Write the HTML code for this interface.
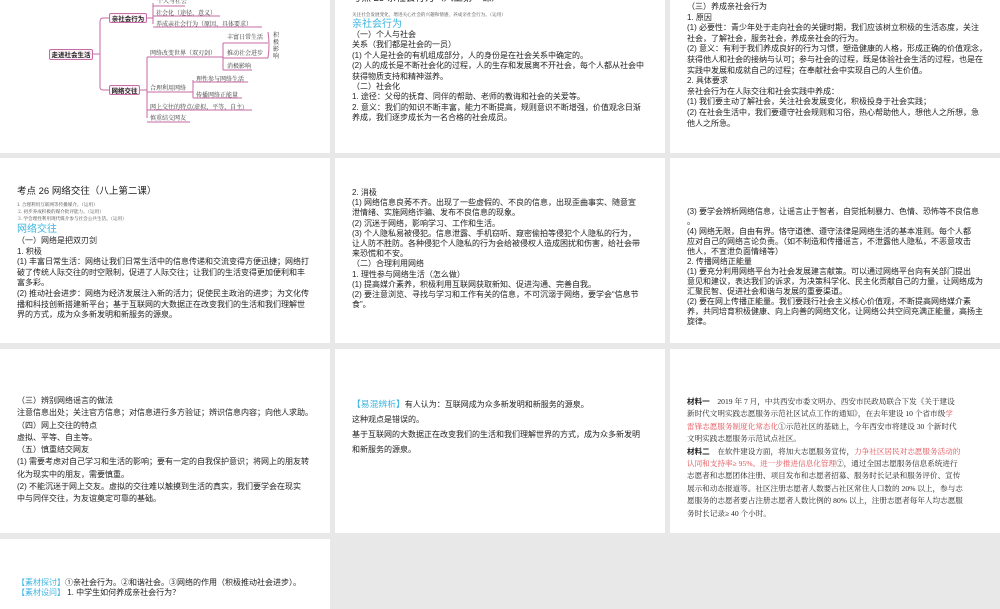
<!DOCTYPE html>
<html><head><meta charset="utf-8">
<style>
*{margin:0;padding:0;box-sizing:border-box}
body{width:1000px;height:600px;background:#e8e8e8;position:relative;overflow:hidden;font-family:"Liberation Sans","Noto Sans CJK SC",sans-serif;color:#222}
.s{position:absolute;background:#fff;overflow:hidden}
.t{position:absolute;white-space:nowrap;font-size:8px;line-height:10.4px}
.c{color:#3bb4e0}
.sm{font-size:4.6px;line-height:7px;color:#444;font-family:"Noto Serif CJK SC",serif}
.mm{position:absolute;font-size:6px;line-height:8px;white-space:nowrap;font-family:"Noto Serif CJK SC",serif;color:#333}
.bx{position:absolute;border:1px solid #c76aa5;border-radius:2px;font-size:6.5px;font-weight:bold;line-height:9px;text-align:center;background:#fdf2f8;font-family:"Noto Sans CJK SC",sans-serif}
.r{color:#e0484f}
.ser{font-family:"Liberation Serif","Noto Serif CJK SC",serif}
</style></head><body>

<div class="s" style="left:0;top:0;width:330px;height:153px">
<svg width="330" height="153" style="position:absolute;left:0;top:0" fill="none" stroke="#c76aa5" stroke-width="1">
<path d="M93 54 H100 M100 22 V87 Q100 90 103 90 H109 M100 22 Q100 18 103 18 H109"/>
<path d="M147 18 H153 M153 3 V24 M153 6 H185 M153 16 H220 M153 27 H262"/>
<path d="M140 90 H147 M147 57 V118 M147 57 H223 M147 92 H193 M147 110 H252 M147 122 H190"/>
<path d="M223 43 V70 M223 43 H268 M223 58 H268 M223 70 H252 M268 32 Q270 45 268 58"/>
<path d="M193 80 V98 M193 82 H248 M193 98 H242"/>
</svg>
<div class="bx" style="left:49px;top:49px;width:44px;height:11px">走进社会生活</div>
<div class="bx" style="left:109px;top:13px;width:38px;height:10px">亲社会行为</div>
<div class="bx" style="left:109px;top:85px;width:31px;height:10px">网络交往</div>
<div class="mm" style="left:157px;top:-3px">个人与社会</div>
<div class="mm" style="left:156px;top:9px">社会化（途径、意义）</div>
<div class="mm" style="left:156px;top:20px">养成亲社会行为（原因、具体要求）</div>
<div class="mm" style="left:150px;top:49px">网络改变世界（双刃剑）</div>
<div class="mm" style="left:227px;top:33px">丰富日常生活</div>
<div class="mm" style="left:227px;top:49px">推动社会进步</div>
<div class="mm" style="left:227px;top:62px">消极影响</div>
<div class="mm" style="left:273px;top:31px;width:6px;white-space:normal;line-height:7px">积极影响</div>
<div class="mm" style="left:150px;top:84px">合理利用网络</div>
<div class="mm" style="left:196px;top:75px">理性参与网络生活</div>
<div class="mm" style="left:196px;top:91px">传播网络正能量</div>
<div class="mm" style="left:150px;top:103px">网上交往的特点(虚拟、平等、自主)</div>
<div class="mm" style="left:150px;top:114px">慎重结交网友</div>
</div>

<div class="s" style="left:335px;top:0;width:330px;height:153px">
<div class="t" style="left:17px;top:-7px;font-size:9.5px;line-height:12px">考点 25 亲社会行为（八上第一课）</div>
<div class="t sm" style="left:17px;top:12px">关注社会发展变化，增进关心社会的兴趣和情感，养成亲社会行为。（运用）</div>
<div class="t c" style="left:17px;top:19px;font-size:10px;line-height:12px">亲社会行为</div>
<div class="t" style="left:17px;top:30px">（一）个人与社会<br>关系（我们都是社会的一员）<br>(1) 个人是社会的有机组成部分，人的身份是在社会关系中确定的。<br>(2) 人的成长是不断社会化的过程，人的生存和发展离不开社会，每个人都从社会中<br>获得物质支持和精神滋养。<br>（二）社会化<br>1. 途径：父母的抚育、同伴的帮助、老师的教诲和社会的关爱等。<br>2. 意义：我们的知识不断丰富，能力不断提高，规则意识不断增强，价值观念日渐<br>养成，我们逐步成长为一名合格的社会成员。</div>
</div>

<div class="s" style="left:670px;top:0;width:330px;height:153px">
<div class="t" style="left:17px;top:2px;line-height:10.6px">（三）养成亲社会行为<br>1. 原因<br>(1) 必要性：青少年处于走向社会的关键时期，我们应该树立积极的生活态度，关注<br>社会，了解社会，服务社会，养成亲社会的行为。<br>(2) 意义：有利于我们养成良好的行为习惯，塑造健康的人格，形成正确的价值观念，<br>获得他人和社会的接纳与认可；参与社会的过程，既是体验社会生活的过程，也是在<br>实践中发展和成就自己的过程；在奉献社会中实现自己的人生价值。<br>2. 具体要求<br>亲社会行为在人际交往和社会实践中养成：<br>(1) 我们要主动了解社会，关注社会发展变化，积极投身于社会实践；<br>(2) 在社会生活中，我们要遵守社会规则和习俗，热心帮助他人，想他人之所想，急<br>他人之所急。</div>
</div>

<div class="s" style="left:0;top:158px;width:330px;height:185px">
<div class="t" style="left:17px;top:28px;font-size:9.5px;line-height:12px">考点 26 网络交往（八上第二课）</div>
<div class="t sm" style="left:17px;top:44px">1. 合理利用互联网等传播媒介。（运用）<br>&nbsp;2. 初步养成积极的媒介批评能力。（运用）<br>&nbsp;3. 学会理性利用现代媒介参与社会公共生活。（运用）</div>
<div class="t c" style="left:17px;top:66px;font-size:10px;line-height:12px">网络交往</div>
<div class="t" style="left:17px;top:78px;line-height:10.6px">（一）网络是把双刃剑<br>1. 积极<br>(1) 丰富日常生活：网络让我们日常生活中的信息传递和交流变得方便迅捷；网络打<br>破了传统人际交往的时空限制，促进了人际交往；让我们的生活变得更加便利和丰<br>富多彩。<br>(2) 推动社会进步：网络为经济发展注入新的活力；促使民主政治的进步；为文化传<br>播和科技创新搭建新平台；基于互联网的大数据正在改变我们的生活和我们理解世<br>界的方式，成为众多新发明和新服务的源泉。</div>
</div>

<div class="s" style="left:335px;top:158px;width:330px;height:185px">
<div class="t" style="left:17px;top:30px;line-height:10.2px">2. 消极<br>(1) 网络信息良莠不齐。出现了一些虚假的、不良的信息，出现歪曲事实、随意宣<br>泄情绪、实施网络诈骗、发布不良信息的现象。<br>(2) 沉迷于网络，影响学习、工作和生活。<br>(3) 个人隐私易被侵犯。信息泄露、手机窃听、窥密偷拍等侵犯个人隐私的行为，<br>让人防不胜防。各种侵犯个人隐私的行为会给被侵权人造成困扰和伤害，给社会带<br>来恐慌和不安。<br>（二）合理利用网络<br>1. 理性参与网络生活（怎么做）<br>(1) 提高媒介素养，积极利用互联网获取新知、促进沟通、完善自我。<br>(2) 要注意浏览、寻找与学习和工作有关的信息，不可沉溺于网络，要学会“信息节<br>食”。</div>
</div>

<div class="s" style="left:670px;top:158px;width:330px;height:185px">
<div class="t" style="left:17px;top:49px;line-height:10px">(3) 要学会辨析网络信息，让谣言止于智者，自觉抵制暴力、色情、恐怖等不良信息<br>。<br>(4) 网络无限，自由有界。恪守道德、遵守法律是网络生活的基本准则。每个人都<br>应对自己的网络言论负责。（如不制造和传播谣言，不泄露他人隐私，不恶意攻击<br>他人，不宣泄负面情绪等）<br>2. 传播网络正能量<br>(1) 要充分利用网络平台为社会发展建言献策。可以通过网络平台向有关部门提出<br>意见和建议，表达我们的诉求，为决策科学化、民主化贡献自己的力量，让网络成为<br>汇聚民智、促进社会和谐与发展的重要渠道。<br>(2) 要在网上传播正能量。我们要践行社会主义核心价值观，不断提高网络媒介素<br>养，共同培育积极健康、向上向善的网络文化，让网络公共空间充满正能量，高扬主<br>旋律。</div>
</div>

<div class="s" style="left:0;top:349px;width:330px;height:184px">
<div class="t" style="left:17px;top:46px;line-height:12.3px">（三）辨别网络谣言的做法<br>注意信息出处；关注官方信息；对信息进行多方验证；辨识信息内容；向他人求助。<br>（四）网上交往的特点<br>虚拟、平等、自主等。<br>（五）慎重结交网友<br>(1) 需要考虑对自己学习和生活的影响；要有一定的自我保护意识；将网上的朋友转<br>化为现实中的朋友，需要慎重。<br>(2) 不能沉迷于网上交友。虚拟的交往难以触摸到生活的真实，我们要学会在现实<br>中与同伴交往，为友谊奠定可靠的基础。</div>
</div>

<div class="s" style="left:335px;top:349px;width:330px;height:184px">
<div class="t" style="left:17px;top:48px;line-height:15px"><span class="c" style="font-size:8.8px">【易混辨析】</span>有人认为：互联网成为众多新发明和新服务的源泉。<br>这种观点是错误的。<br>基于互联网的大数据正在改变我们的生活和我们理解世界的方式，成为众多新发明<br>和新服务的源泉。</div>
</div>

<div class="s" style="left:670px;top:349px;width:330px;height:184px">
<div class="t ser" style="left:17px;top:47px;line-height:12.4px;font-size:7.6px"><b style="font-family:'Noto Sans CJK SC',sans-serif">材料一</b>　2019 年 7 月，中共西安市委文明办、西安市民政局联合下发《关于建设<br>新时代文明实践志愿服务示范社区试点工作的通知》，在去年建设 10 个省市级<span class="r">学</span><br><span class="r">雷锋志愿服务制度化常态化</span>①示范社区的基础上，今年西安市将建设 30 个新时代<br>文明实践志愿服务示范试点社区。<br><b style="font-family:'Noto Sans CJK SC',sans-serif">材料二</b>　在软件建设方面，将加大志愿服务宣传，<span class="r">力争社区居民对志愿服务活动的</span><br><span class="r">认同和支持率≥ 95%。进一步推进信息化管理</span>②，通过全国志愿服务信息系统进行<br>志愿者和志愿团体注册、项目发布和志愿者招募、服务时长记录和服务评价、宣传<br>展示和动态报道等。社区注册志愿者人数要占社区常住人口数的 20% 以上，参与志<br>愿服务的志愿者要占注册志愿者人数比例的 80% 以上，注册志愿者每年人均志愿服<br>务时长记录≥ 40 个小时。</div>
</div>

<div class="s" style="left:0;top:539px;width:330px;height:70px">
<div class="t" style="left:17px;top:39px;line-height:9.5px;font-size:8px"><span class="c">【素材探讨】</span>①亲社会行为。②和谐社会。③网络的作用（积极推动社会进步）。<br><span class="c">【素材设问】</span> 1. 中学生如何养成亲社会行为？</div>
</div>

</body></html>
